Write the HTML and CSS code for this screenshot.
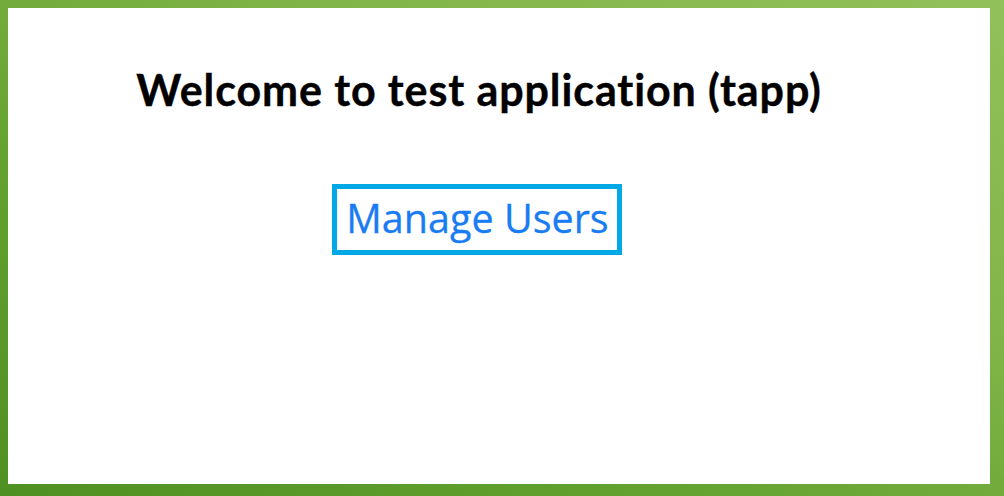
FILE: index.html
```html
<!DOCTYPE html>
<html>
<head>
<meta charset="utf-8">
<link rel="stylesheet" href="styles.css">
</head>
<body>
<div class="frame">
  <main class="panel">
    <h1 class="title">Welcome to test application (tapp)</h1>
    <a class="manage" href="#">Manage Users</a>
  </main>
</div>
</body>
</html>
```
FILE: styles.css
```css
html, body {
  margin: 0;
  padding: 0;
}
body {
  width: 1004px;
  height: 496px;
  overflow: hidden;
}
.frame {
  box-sizing: border-box;
  width: 1004px;
  height: 496px;
  padding: 8px 14px 12px 8px;
  background: linear-gradient(to top right, #4f9022 0%, #64a331 35%, #80b448 65%, #92c05a 100%);
}
.panel {
  box-sizing: border-box;
  height: 476px;
  background: #ffffff;
  display: flex;
  flex-direction: column;
  align-items: center;
  padding: 57px 40px 0 0;
}
.title {
  margin: 0;
  font-family: Lato, "Open Sans", sans-serif;
  font-weight: 700;
  font-size: 43px;
  letter-spacing: 0.9px;
  font-variant-ligatures: none;
  line-height: 50px;
  color: #000;
  -webkit-text-stroke: 0.4px #000;
}
.manage {
  margin-top: 69px;
  margin-right: 4px;
  display: block;
  border: 5px solid #00a9e6;
  padding: 0 8px 0 9px;
  height: 71px;
  box-sizing: border-box;
  font-family: "Open Sans", sans-serif;
  font-size: 39.5px;
  line-height: 58px;
  color: #1a7cf2;
  text-decoration: none;
  -webkit-text-stroke: 0.3px #1a7cf2;
}
```
